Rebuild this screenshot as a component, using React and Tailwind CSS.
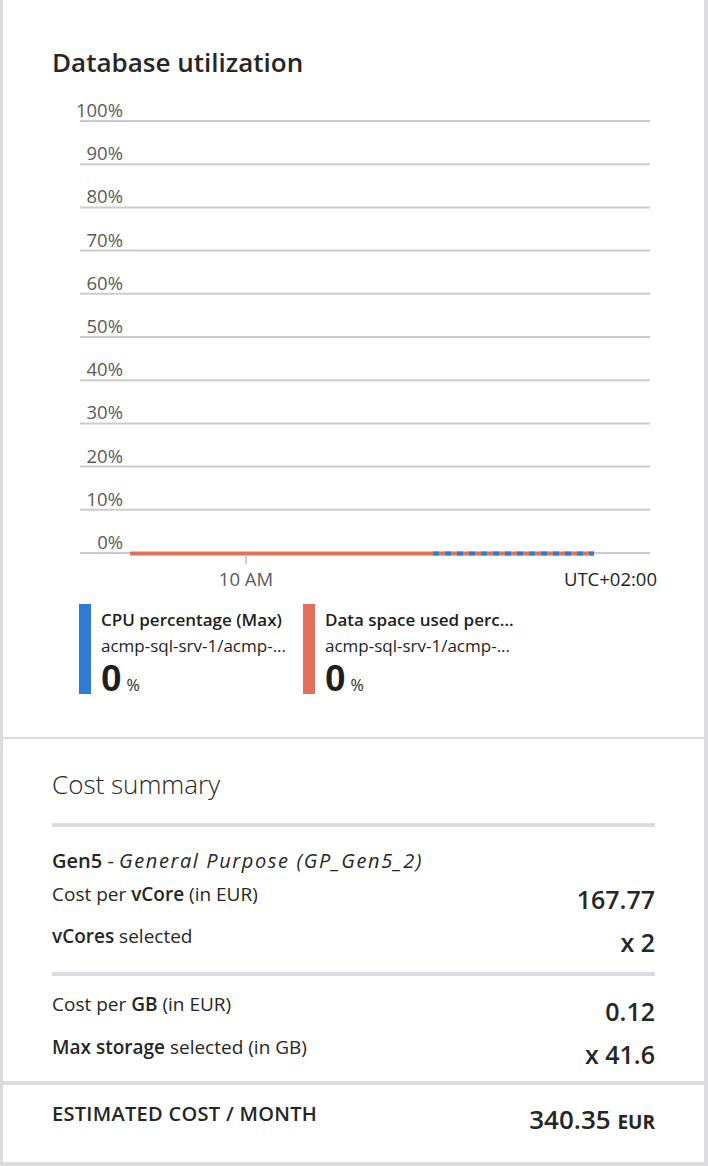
import React from 'react';

const FONT = { fontFamily: '"Open Sans", "Noto Sans", sans-serif' };
const BIG_FONT = { fontFamily: '"Liberation Sans", Arial, sans-serif' };

const yLabels = ['100%', '90%', '80%', '70%', '60%', '50%', '40%', '30%', '20%', '10%', '0%'];

const UtilizationChart = () => {
    return (
        <svg width="701" height="508" className="block" style={FONT}>
            {yLabels.map((label, i) => {
                const y = 31 + i * 43.2;
                return (
                    <g key={label}>
                        <line x1="77" x2="647" y1={y} y2={y} stroke="#cccccc" strokeWidth="2" />
                        <text x="120" y={y - 4} textAnchor="end" fontSize="18.5" fill="#5a5a5a">{label}</text>
                    </g>
                );
            })}
            {/* series */}
            <line x1="127" x2="591" y1="463.5" y2="463.5" stroke="#e1705a" strokeWidth="4" />
            <line x1="430" x2="591" y1="463.5" y2="463.5" stroke="#2f7ad4" strokeWidth="4" strokeDasharray="6 6" />
            {/* x axis */}
            <line x1="243" x2="243" y1="466" y2="474" stroke="#cccccc" strokeWidth="2" />
            <text x="243" y="496" textAnchor="middle" fontSize="18.5" fill="#5a5a5a">10 AM</text>
            <text x="654" y="496" textAnchor="end" fontSize="18.5" fill="#222222">UTC+02:00</text>
        </svg>
    );
};

const LegendItem = ({ color, title, subtitle }) => (
    <div className="flex w-[224px] h-[90px]">
        <div className={`w-[12px] h-[90px] ${color}`}></div>
        <div className="ml-[10px] pt-[4px] h-[90px] text-[#1e1e1e]">
            <p className="text-[17px] leading-[24px] font-semibold whitespace-nowrap">{title}</p>
            <p className="text-[17px] leading-[24px] mt-[2px] whitespace-nowrap">{subtitle}</p>
            <div className="flex items-baseline h-[34px] mt-[4px]">
                <span className="inline-block text-[37px] leading-[34px] h-[34px] font-bold" style={BIG_FONT}>0</span>
                <span className="inline-block text-[16px] leading-[16px] ml-[5px]">%</span>
            </div>
        </div>
    </div>
);

const App = () => {
    return (
        <div className="w-[708px] h-[1166px] bg-white text-[#262626]" style={FONT}>
            <div className="h-full border-l-[3px] border-r-[4px] border-b-[4px] border-[#dcdce0]">
                {/* Database utilization */}
                <div className="h-[737px] pt-[44px]">
                    <h2 className="pl-[49px] text-[26px] leading-[36px] font-semibold text-[#262626]">Database utilization</h2>
                    <div className="mt-[10px]">
                        <UtilizationChart />
                    </div>
                    <div className="flex pl-[76px] mt-[6px]">
                        <LegendItem color="bg-[#2f7ad4]" title="CPU percentage (Max)" subtitle="acmp-sql-srv-1/acmp-..." />
                        <LegendItem color="bg-[#e1705a]" title="Data space used perc..." subtitle="acmp-sql-srv-1/acmp-..." />
                    </div>
                </div>

                <div className="h-[2px] bg-[#dcdce0]"></div>

                {/* Cost summary */}
                <div className="px-[49px]">
                    <h2 className="mt-[27px] text-[26px] leading-[36px] font-light text-[#262626]">Cost summary</h2>
                    <div className="mt-[21px] h-[4px] bg-[#dcdce0]"></div>

                    <p className="mt-[22px] text-[20px] leading-[24px]">
                        <span className="font-semibold">Gen5</span> - <span className="italic tracking-[1.6px]">General Purpose (GP_Gen5_2)</span>
                    </p>

                    <div className="mt-[9px] h-[42px] flex justify-between items-start">
                        <p className="text-[19px] leading-[24px]">Cost per <span className="font-semibold">vCore</span> (in EUR)</p>
                        <p className="mt-[1px] text-[25px] leading-[32px] font-semibold">167.77</p>
                    </div>
                    <div className="h-[42px] flex justify-between items-start">
                        <p className="text-[19px] leading-[24px]"><span className="font-semibold">vCores</span> selected</p>
                        <p className="mt-[2px] text-[25px] leading-[32px] font-semibold">x 2</p>
                    </div>

                    <div className="mt-[6px] h-[4px] bg-[#dcdce0]"></div>

                    <div className="mt-[16px] h-[43px] flex justify-between items-start">
                        <p className="text-[19px] leading-[24px]">Cost per <span className="font-semibold">GB</span> (in EUR)</p>
                        <p className="mt-[3px] text-[25px] leading-[32px] font-semibold">0.12</p>
                    </div>
                    <div className="h-[46px] flex justify-between items-start">
                        <p className="text-[19px] leading-[24px]"><span className="font-semibold">Max storage</span> selected (in GB)</p>
                        <p className="mt-[3px] text-[25px] leading-[32px] font-semibold">x 41.6</p>
                    </div>
                </div>

                <div className="h-[4px] bg-[#dcdce0]"></div>

                <div className="px-[49px] pt-[16px] flex justify-between items-start">
                    <p className="mt-[1px] text-[20px] leading-[24px] font-semibold tracking-[0.3px]">ESTIMATED COST / MONTH</p>
                    <p className="mt-[2px] text-[26px] leading-[32px] font-semibold">
                        340.35 <span className="text-[19px] font-bold">EUR</span>
                    </p>
                </div>
            </div>
        </div>
    );
};

export default App;
